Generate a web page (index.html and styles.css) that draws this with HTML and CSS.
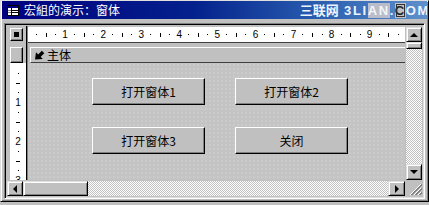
FILE: index.html
```html
<!DOCTYPE html>
<html lang="zh">
<head>
<meta charset="utf-8">
<title>宏組的演示：窗体</title>
<link rel="stylesheet" href="styles.css">
</head>
<body>
<div class="window">
  <div class="titlebar">
    <svg class="ticon" width="12" height="11" viewBox="0 0 12 11">
      <rect x="0.5" y="0.5" width="11" height="10" fill="#fff" stroke="#000"/>
      <rect x="1" y="1" width="10" height="2" fill="#000080"/>
      <line x1="4.5" y1="3" x2="4.5" y2="10" stroke="#000"/>
      <line x1="5" y1="5.5" x2="11" y2="5.5" stroke="#000"/>
      <line x1="5" y1="7.5" x2="11" y2="7.5" stroke="#000"/>
      <line x1="1" y1="5.5" x2="4" y2="5.5" stroke="#808080"/>
      <line x1="1" y1="7.5" x2="4" y2="7.5" stroke="#808080"/>
    </svg>
    <span class="title">宏組的演示：窗体</span>
    <span class="wm"><span class="wmcn">三联网</span> 3LI<span class="wmbtn">AN</span>.<span class="wmbtn2">C</span>OM</span>
  </div>
  <div class="frame">
    <div class="corner"><i class="sq"></i></div>
    <div class="sep"></div>
    <div class="hruler">
      <span class="c"><i class="d"></i></span><span class="c"><i class="t"></i></span><span class="c"><i class="d"></i></span><span class="c">1</span>
      <span class="c"><i class="d"></i></span><span class="c"><i class="t"></i></span><span class="c"><i class="d"></i></span><span class="c">2</span>
      <span class="c"><i class="d"></i></span><span class="c"><i class="t"></i></span><span class="c"><i class="d"></i></span><span class="c">3</span>
      <span class="c"><i class="d"></i></span><span class="c"><i class="t"></i></span><span class="c"><i class="d"></i></span><span class="c">4</span>
      <span class="c"><i class="d"></i></span><span class="c"><i class="t"></i></span><span class="c"><i class="d"></i></span><span class="c">5</span>
      <span class="c"><i class="d"></i></span><span class="c"><i class="t"></i></span><span class="c"><i class="d"></i></span><span class="c">6</span>
      <span class="c"><i class="d"></i></span><span class="c"><i class="t"></i></span><span class="c"><i class="d"></i></span><span class="c">7</span>
      <span class="c"><i class="d"></i></span><span class="c"><i class="t"></i></span><span class="c"><i class="d"></i></span><span class="c">8</span>
      <span class="c"><i class="d"></i></span><span class="c"><i class="t"></i></span><span class="c"><i class="d"></i></span><span class="c">9</span>
      <span class="c"><i class="d"></i></span><span class="c"><i class="t"></i></span><span class="c"><i class="d"></i></span>
    </div>
    <div class="vscroll">
      <div class="sbtn sup"><i class="tri-up"></i></div>
      <div class="vthumb"></div>
      <div class="vtrack"></div>
      <div class="sbtn sdown"><i class="tri-down"></i></div>
    </div>
    <div class="hbox"></div>
    <div class="hbar">
      <svg class="secicon" width="10" height="10" viewBox="0 0 10 10">
        <path d="M0 9.5 L1 2.2 L3.2 4.4 L6.8 0.8 L9.3 3.3 L5.7 6.8 L7.8 9 Z" fill="#000"/>
      </svg>
      <span class="sectitle">主体</span>
    </div>
    <div class="vruler">
      <span class="vc"><i class="d"></i></span><span class="vc"><i class="h"></i></span><span class="vc"><i class="d"></i></span><span class="vc">1</span>
      <span class="vc"><i class="d"></i></span><span class="vc"><i class="h"></i></span><span class="vc"><i class="d"></i></span><span class="vc">2</span>
      <span class="vc"><i class="d"></i></span><span class="vc"><i class="h"></i></span><span class="vc"><i class="d"></i></span><span class="vc">3</span>
    </div>
    <div class="detail">
      <div class="btn">打开窗体1</div>
      <div class="btn">打开窗体2</div>
      <div class="btn">打开窗体3</div>
      <div class="btn">关闭</div>
    </div>
    <div class="hscroll">
      <div class="sbtn sleft"><i class="tri-left"></i></div>
      <div class="hthumb"></div>
      <div class="htrack"></div>
      <div class="sbtn sright"><i class="tri-right"></i></div>
    </div>
    <div class="grip">
      <svg width="18" height="17" viewBox="0 0 18 17">
        <line x1="16" y1="4" x2="5" y2="15" stroke="#fff"/>
        <line x1="17" y1="4" x2="6" y2="15" stroke="#808080"/>
        <line x1="17" y1="5" x2="7" y2="15" stroke="#808080"/>
        <line x1="16" y1="8" x2="9" y2="15" stroke="#fff"/>
        <line x1="17" y1="8" x2="10" y2="15" stroke="#808080"/>
        <line x1="17" y1="9" x2="11" y2="15" stroke="#808080"/>
        <line x1="16" y1="12" x2="13" y2="15" stroke="#fff"/>
        <line x1="17" y1="12" x2="14" y2="15" stroke="#808080"/>
        <line x1="17" y1="13" x2="15" y2="15" stroke="#808080"/>
      </svg>
    </div>
  </div>
</div>
</body>
</html>
```

FILE: styles.css
```css
* { box-sizing: border-box; }
html, body { margin: 0; padding: 0; }
body {
  width: 429px;
  height: 205px;
  overflow: hidden;
  background: #c0c0c0;
  font-family: "Noto Sans CJK SC", "Liberation Sans", sans-serif;
}
.window {
  width: 429px;
  height: 202px;
  background: #c0c0c0;
  border: 1px solid;
  border-color: #dfdfdf #000 #000 #dfdfdf;
  box-shadow: inset 1px 1px #fff, inset -1px -1px #808080;
  padding: 0 1px 2px 1px;
  display: flex;
  flex-direction: column;
}
.titlebar {
  height: 18px;
  flex: none;
  display: flex;
  align-items: center;
  padding-left: 5px;
  background: linear-gradient(90deg, #000080 0%, #03218c 45%, #2a5fb0 75%, #5f90cc 100%);
  color: #fff;
  overflow: hidden;
  white-space: nowrap;
}
.ticon { flex: none; }
.title {
  margin-left: 5px;
  font-size: 12px;
  line-height: 18px;
}
.wm {
  margin-left: auto;
  margin-right: -3px;
  font-family: "Liberation Sans", sans-serif;
  font-weight: bold;
  font-size: 13px;
  letter-spacing: 1.6px;
  color: #eef4ff;
  line-height: 18px;
}
.wmcn {
  font-family: "Noto Sans CJK SC", sans-serif;
  font-size: 13px;
  letter-spacing: 0;
}
.wmbtn {
  background: #b8bccb;
  color: #f4f4f4;
}
.wmbtn2 {
  background: #c0c0c0;
  color: #222;
  outline: 1px solid #333;
  outline-offset: -2px;
}
.frame {
  flex: 1;
  margin: 4px 2px 0 2px;
  border: 1px solid;
  border-color: #808080 #fff #fff #808080;
  box-shadow: inset 1px 1px #000, inset -1px -1px #dfdfdf;
  padding: 1px;
  display: grid;
  grid-template-columns: 20px 2px 377px 18px;
  grid-template-rows: 20px 18px 117px 17px;
  grid-template-areas:
    "corner sep ruler vs"
    "hbox   sep hbar  vs"
    "vr     sep detail vs"
    "hs     hs  hs    grip";
}
.corner { grid-area: corner; padding: 3px 0 0 4px; }
.sq {
  display: flex;
  align-items: center;
  justify-content: center;
  width: 13px;
  height: 13px;
  background: #c0c0c0;
  border: 1px solid;
  border-color: #fff #000 #000 #fff;
  box-shadow: inset -1px -1px #808080;
}
.sq::after {
  content: "";
  width: 5px;
  height: 5px;
  background: #000;
}
.sep {
  grid-area: sep;
  margin-top: 1px;
  background: #808080;
  border-left: 1px solid #000;
}
.hruler {
  grid-area: ruler;
  margin-top: 2px;
  height: 16px;
  background: #fff;
  border-bottom: 1px solid #404040;
  display: flex;
  align-items: center;
  padding-left: 3.8px;
  overflow: hidden;
  font-family: "Liberation Sans", sans-serif;
  font-size: 10px;
  color: #000;
}
.c {
  flex: none;
  width: 9.525px;
  height: 12px;
  display: flex;
  align-items: center;
  justify-content: center;
  line-height: 1;
}
.d {
  display: block;
  width: 1px;
  height: 1px;
  background: #000;
}
.t {
  display: block;
  width: 1px;
  height: 4px;
  background: #000;
}
.h {
  display: block;
  width: 4px;
  height: 1px;
  background: #000;
}
.vscroll {
  grid-area: vs;
  display: flex;
  flex-direction: column;
  padding: 2px 1px 0 1px;
}
.sbtn {
  flex: none;
  display: flex;
  align-items: center;
  justify-content: center;
  background: #c0c0c0;
  border: 1px solid;
  border-color: #dfdfdf #000 #000 #dfdfdf;
  box-shadow: inset 1px 1px #fff, inset -1px -1px #808080;
}
.sup { height: 15px; }
.sdown { height: 16px; }
.vthumb {
  flex: none;
  height: 7px;
  background: #c0c0c0;
  border: 1px solid;
  border-color: #dfdfdf #000 #000 #dfdfdf;
  box-shadow: inset 1px 1px #fff, inset -1px -1px #808080;
}
.vtrack, .htrack {
  flex: 1;
  background: repeating-conic-gradient(#c0c0c0 0 25%, #fff 0 50%) 0 0 / 2px 2px;
}
.tri-up {
  width: 0; height: 0;
  border-left: 4px solid transparent;
  border-right: 4px solid transparent;
  border-bottom: 4px solid #000;
}
.tri-down {
  width: 0; height: 0;
  border-left: 4px solid transparent;
  border-right: 4px solid transparent;
  border-top: 4px solid #000;
}
.tri-left {
  width: 0; height: 0;
  border-top: 4px solid transparent;
  border-bottom: 4px solid transparent;
  border-right: 4px solid #000;
}
.tri-right {
  width: 0; height: 0;
  border-top: 4px solid transparent;
  border-bottom: 4px solid transparent;
  border-left: 4px solid #000;
}
.hbox {
  grid-area: hbox;
  margin: 2px 3px 0 4px;
  background: #c0c0c0;
  border: 1px solid;
  border-color: #fff #000 #000 #fff;
  box-shadow: inset -1px -1px #808080;
}
.hbar {
  grid-area: hbar;
  margin: 2px 0 0 2px;
  display: flex;
  align-items: center;
  background: #c0c0c0;
  border-top: 1px solid #fff;
  border-left: 1px solid #fff;
  border-bottom: 1px solid #404040;
  padding-left: 4px;
}
.secicon { flex: none; }
.sectitle {
  margin-left: 2px;
  font-size: 12px;
  line-height: 14px;
  color: #000;
}
.vruler {
  grid-area: vr;
  margin-left: 4px;
  background: #fff;
  display: flex;
  flex-direction: column;
  align-items: center;
  padding-top: 5.6px;
  overflow: hidden;
  font-family: "Liberation Sans", sans-serif;
  font-size: 10px;
  color: #000;
}
.vc {
  flex: none;
  height: 9.75px;
  width: 12px;
  display: flex;
  align-items: center;
  justify-content: center;
  line-height: 1;
}
.detail {
  grid-area: detail;
  background-color: #c4c4c4;
  background-image: radial-gradient(circle, #cecece 0.6px, transparent 0.9px);
  background-size: 4px 4px;
  display: grid;
  grid-template-columns: 113px 113px;
  grid-auto-rows: 27px;
  column-gap: 30px;
  row-gap: 22px;
  padding: 15px 0 0 64px;
  align-content: start;
}
.btn {
  display: flex;
  align-items: center;
  justify-content: center;
  background: #c0c0c0;
  border: 1px solid;
  border-color: #fff #000 #000 #fff;
  box-shadow: inset -1px -1px #808080;
  font-size: 12px;
  color: #000;
}
.hscroll {
  grid-area: hs;
  display: flex;
  padding: 1px 0 1px 1px;
}
.sleft { width: 16px; }
.sright { width: 17px; }
.hthumb {
  flex: none;
  width: 65px;
  background: #c0c0c0;
  border: 1px solid;
  border-color: #dfdfdf #000 #000 #dfdfdf;
  box-shadow: inset 1px 1px #fff, inset -1px -1px #808080;
}
.grip {
  grid-area: grip;
  background: #c0c0c0;
  display: flex;
}
```
